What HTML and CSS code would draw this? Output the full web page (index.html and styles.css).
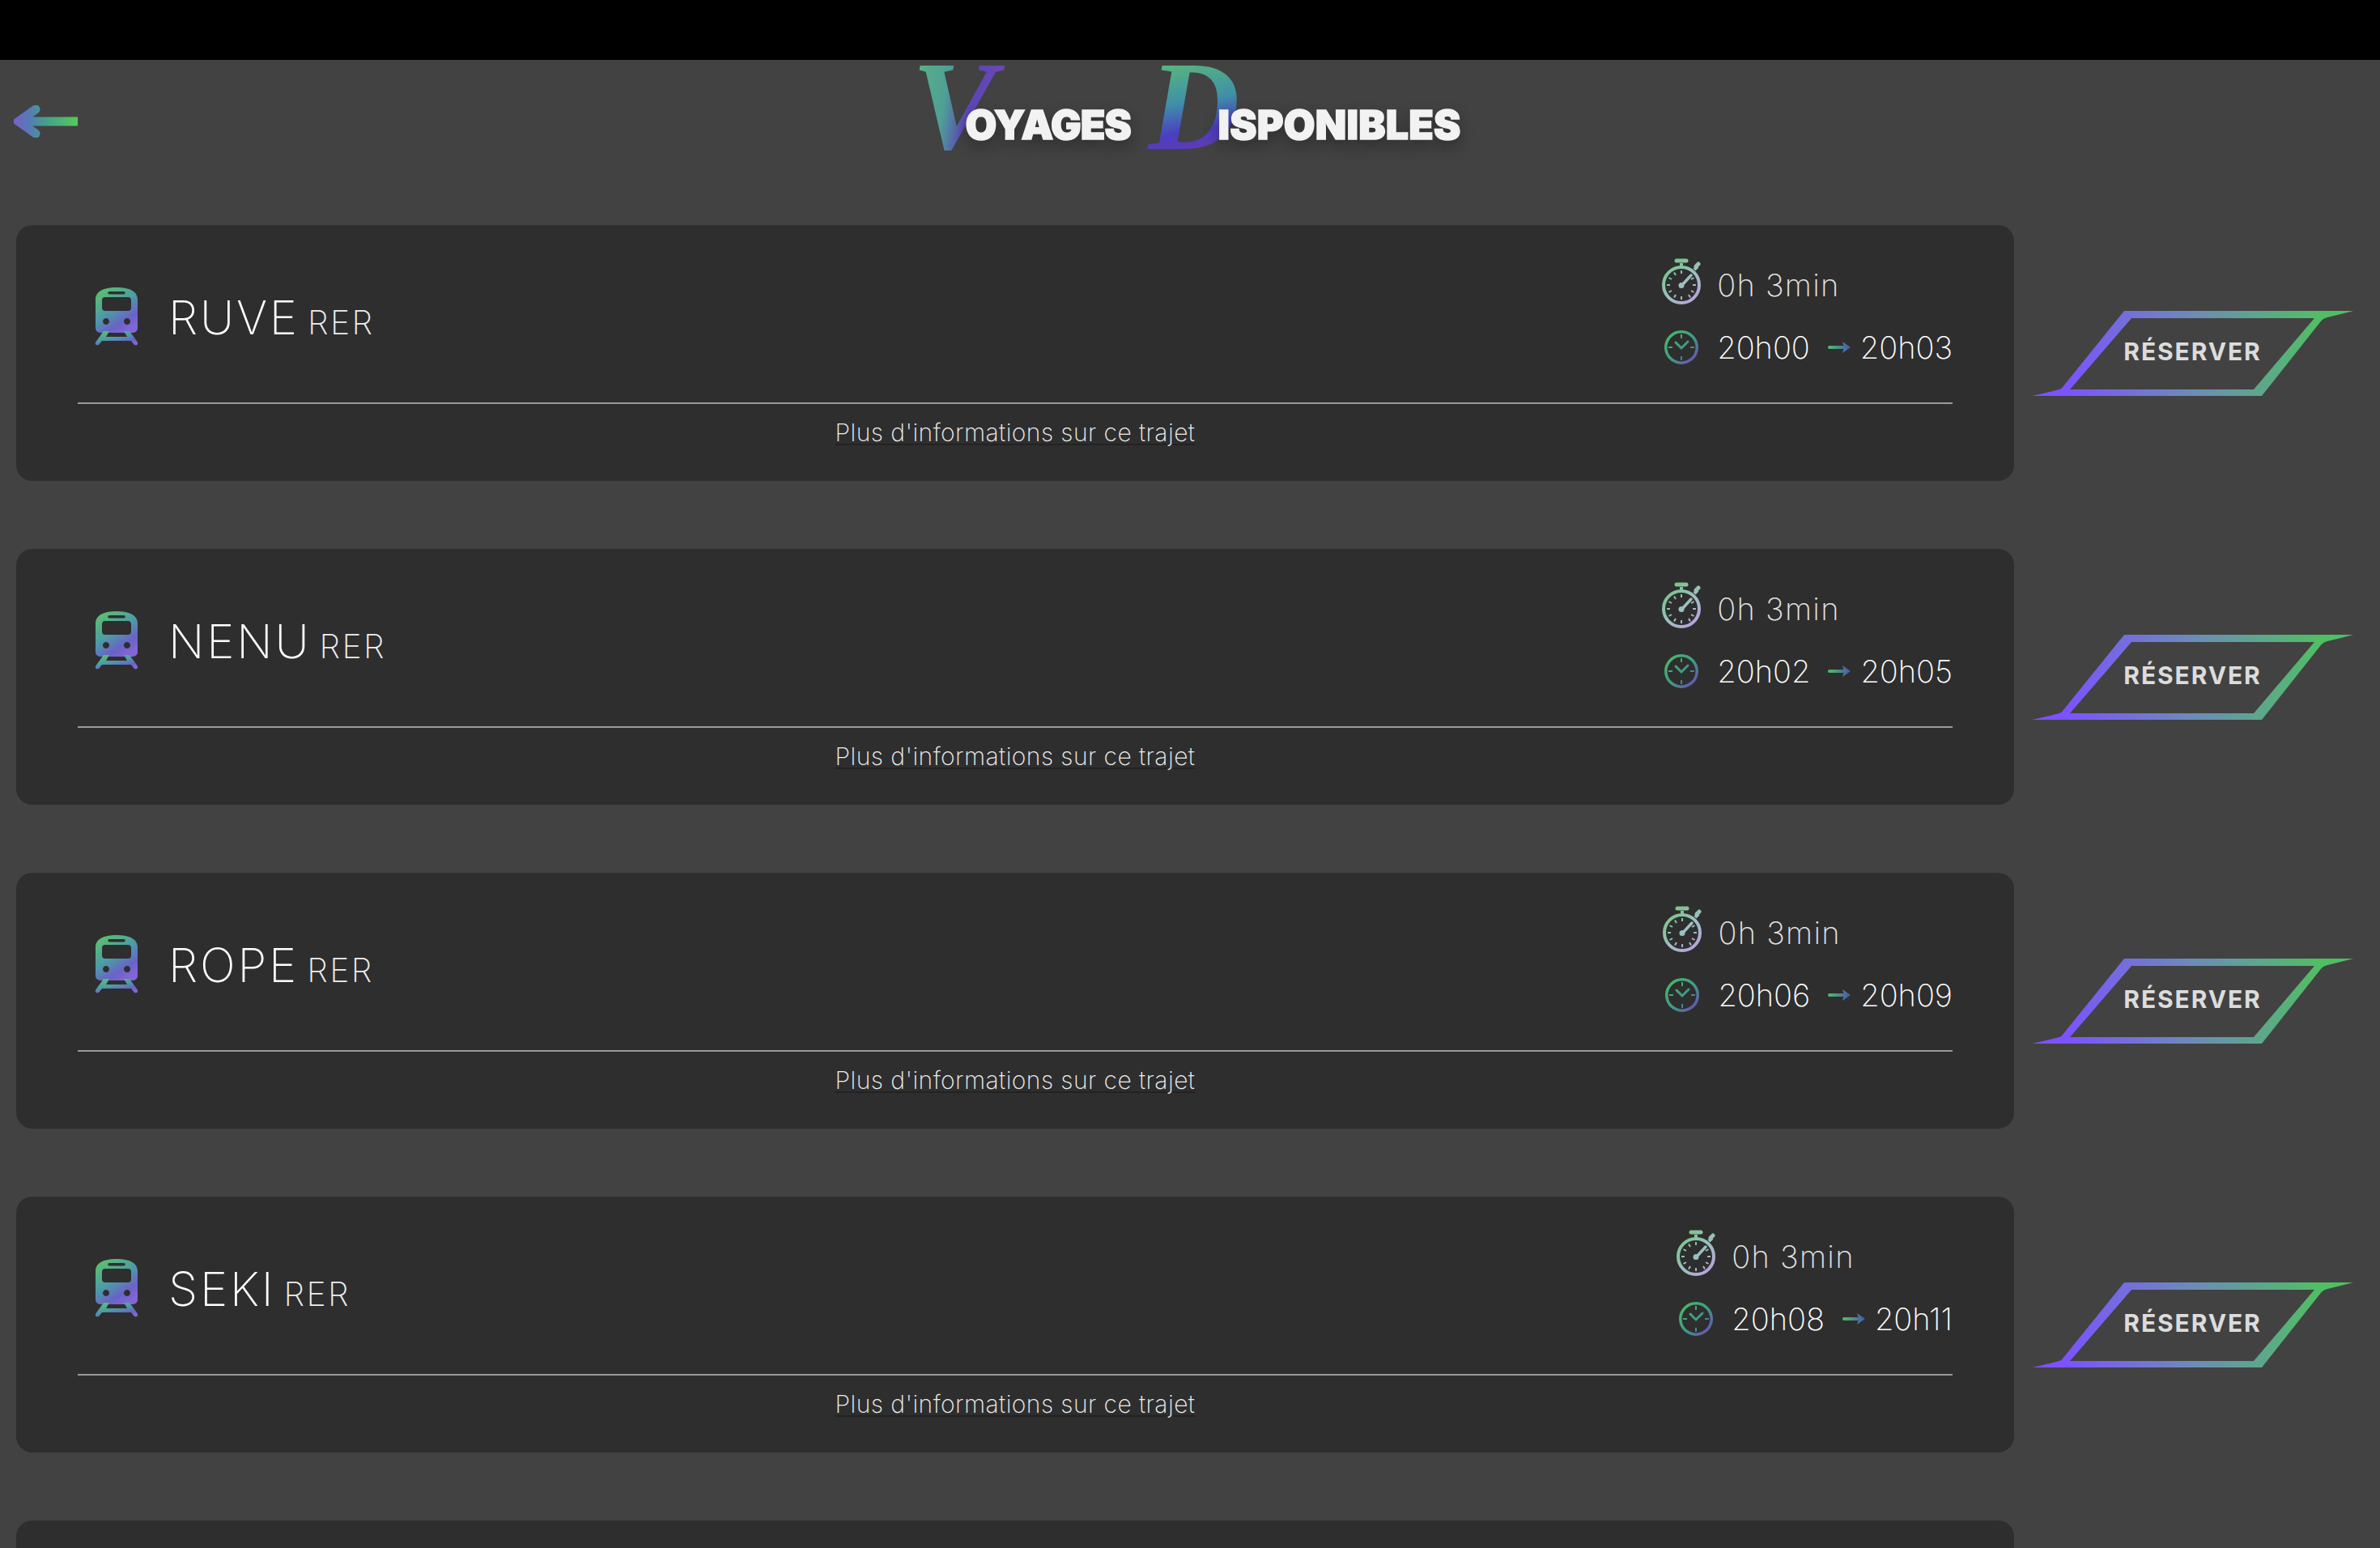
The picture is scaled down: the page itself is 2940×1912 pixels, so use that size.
FILE: index.html
```html
<!DOCTYPE html>
<html lang="fr">
<head>
<meta charset="utf-8">
<title>Voyages Disponibles</title>
<link rel="stylesheet" href="styles.css">
</head>
<body>
<svg class="defs" aria-hidden="true">
  <defs>
    <linearGradient id="gTrain" x1="0.1" y1="0" x2="0.7" y2="1">
      <stop offset="0" stop-color="#5cc46a"/><stop offset=".5" stop-color="#4d9aa8"/><stop offset=".8" stop-color="#6a62c8"/><stop offset="1" stop-color="#8266d8"/>
    </linearGradient>
    <linearGradient id="gWatch" gradientUnits="userSpaceOnUse" x1="4" y1="10" x2="46" y2="54">
      <stop offset="0" stop-color="#78c485"/><stop offset=".5" stop-color="#9cc0c0"/><stop offset="1" stop-color="#bb9fe0"/>
    </linearGradient>
    <linearGradient id="gClock" gradientUnits="userSpaceOnUse" x1="4" y1="4" x2="38" y2="38">
      <stop offset="0" stop-color="#48b86a"/><stop offset=".55" stop-color="#3f9a86"/><stop offset="1" stop-color="#6a4fb8"/>
    </linearGradient>
    <linearGradient id="gArrow" gradientUnits="userSpaceOnUse" x1="0" y1="0" x2="28" y2="0">
      <stop offset="0" stop-color="#4fc061"/><stop offset="1" stop-color="#4a55b0"/>
    </linearGradient>
    <linearGradient id="gBack" gradientUnits="userSpaceOnUse" x1="0" y1="0" x2="80" y2="0">
      <stop offset="0" stop-color="#7860c8"/><stop offset=".22" stop-color="#5878b8"/><stop offset=".5" stop-color="#44a08c"/><stop offset="1" stop-color="#55cc55"/>
    </linearGradient>
    <linearGradient id="gBtn" gradientUnits="userSpaceOnUse" x1="40" y1="0" x2="360" y2="0">
      <stop offset="0" stop-color="#7c52ff"/><stop offset=".5" stop-color="#6c8cb8"/><stop offset="1" stop-color="#4fc061"/>
    </linearGradient>
    <symbol id="train" viewBox="0 0 56 72">
      <path fill="url(#gTrain)" fill-rule="evenodd" d="M2 15C2 5 12 0 28 0S54 5 54 15V50C54 54 51 56 47 56H9C5 56 2 54 2 50ZM19 5a1.5 1.5 0 0 0 0 3.500H37a1.500 1.500 0 0 0 0-3.500ZM14 12a4 4 0 0 0-4 4v9a4 4 0 0 0 4 4H42a4 4 0 0 0 4-4V16a4 4 0 0 0-4-4ZM15 38a4 4 0 1 0 0.010 0ZM41 38a4 4 0 1 0 0.010 0Z"/>
      <path fill="url(#gTrain)" d="M12 54H19L15 61H41L37 54H44L52 65C56 70 54 72 50 71L46 66H10L6 71C2 72 0 70 4 65Z"/>
    </symbol>
    <symbol id="watch" viewBox="0 0 48 57">
      <g fill="none" stroke="url(#gWatch)">
        <circle cx="24" cy="33" r="22" stroke-width="4"/>
        <path stroke-width="2" d="M24 15v4M24 47v4M6 33h4M38 33h4M15 17.500l2 3.500M33 45l2 3.500M8.500 24l3.500 2M36 40l3.500 2M8.500 42l3.500-2M36 26l3.500-2M15 48.500l2-3.500"/>
        <path stroke-width="3.500" stroke-linecap="round" d="M24 34L36 21"/>
        <path stroke-width="4" d="M24 6v5M40 14l4-4"/>
        <path stroke-width="5" stroke-linecap="round" d="M18 3h12M42 10l3-3"/>
      </g>
      <circle cx="24" cy="33.500" r="3.500" fill="url(#gWatch)"/>
    </symbol>
    <symbol id="clock" viewBox="0 0 42 42">
      <g fill="none" stroke="url(#gClock)">
        <circle cx="21" cy="21" r="19.250" stroke-width="3.500"/>
        <path stroke-width="2" d="M21 5v5M21 32v5M5 21h5M32 21h5"/>
        <path stroke-width="3" stroke-linecap="round" d="M14 15l7 7 8-8"/>
      </g>
    </symbol>
    <symbol id="arrow" viewBox="0 0 28 14">
      <path fill="none" stroke="url(#gArrow)" stroke-width="4" stroke-linecap="round" d="M2 7H24"/>
      <path fill="url(#gArrow)" d="M18 0L28 7L18 14L20 7Z"/>
    </symbol>
    <symbol id="btn" viewBox="0 0 397 105">
      <path fill="url(#gBtn)" fill-rule="evenodd" d="M0 105C10 103 22 100 30 98C34 97 37 96 38 94L114 0H397C387 3 376 5 365 8C361 9 358 11 356 14L284 105ZM123 9L47 97H274L349 9Z"/>
    </symbol>
  </defs>
</svg>

<div class="topbar"></div>

<header class="header">
  <a class="back" href="#" aria-label="Retour">
    <svg class="back-icon" viewBox="0 0 80 40">
      <path fill="none" stroke="url(#gBack)" stroke-width="11" stroke-linecap="round" stroke-linejoin="miter" d="M27 5L6 20L27 35"/>
      <path fill="none" stroke="url(#gBack)" stroke-width="11" stroke-linecap="butt" d="M8 20H79"/>
    </svg>
  </a>
  <h1 class="title">
    <span class="cap cap-v">V</span><span class="word word-1">OYAGES</span><span class="cap cap-d">D</span><span class="word word-2">ISPONIBLES</span>
  </h1>
  <span class="header-end"></span>
</header>

<main class="list">
  <section class="row">
    <article class="card">
      <div class="card-top">
        <div class="line-name">
          <svg class="train"><use href="#train"/></svg>
          <p class="name">RUVE <span class="kind">RER</span></p>
        </div>
        <div class="times">
          <div class="time-row"><svg class="watch"><use href="#watch"/></svg><span class="duration">0h 3min</span></div>
          <div class="time-row"><svg class="clock"><use href="#clock"/></svg><span class="hour">20h00</span><svg class="mini"><use href="#arrow"/></svg><span class="hour">20h03</span></div>
        </div>
      </div>
      <div class="card-foot"><a class="more" href="#">Plus d'informations sur ce trajet</a></div>
    </article>
    <a class="book" href="#"><svg class="book-shape"><use href="#btn"/></svg><span class="book-label">RÉSERVER</span></a>
  </section>

  <section class="row">
    <article class="card">
      <div class="card-top">
        <div class="line-name">
          <svg class="train"><use href="#train"/></svg>
          <p class="name">NENU <span class="kind">RER</span></p>
        </div>
        <div class="times">
          <div class="time-row"><svg class="watch"><use href="#watch"/></svg><span class="duration">0h 3min</span></div>
          <div class="time-row"><svg class="clock"><use href="#clock"/></svg><span class="hour">20h02</span><svg class="mini"><use href="#arrow"/></svg><span class="hour">20h05</span></div>
        </div>
      </div>
      <div class="card-foot"><a class="more" href="#">Plus d'informations sur ce trajet</a></div>
    </article>
    <a class="book" href="#"><svg class="book-shape"><use href="#btn"/></svg><span class="book-label">RÉSERVER</span></a>
  </section>

  <section class="row">
    <article class="card">
      <div class="card-top">
        <div class="line-name">
          <svg class="train"><use href="#train"/></svg>
          <p class="name">ROPE <span class="kind">RER</span></p>
        </div>
        <div class="times">
          <div class="time-row"><svg class="watch"><use href="#watch"/></svg><span class="duration">0h 3min</span></div>
          <div class="time-row"><svg class="clock"><use href="#clock"/></svg><span class="hour">20h06</span><svg class="mini"><use href="#arrow"/></svg><span class="hour">20h09</span></div>
        </div>
      </div>
      <div class="card-foot"><a class="more" href="#">Plus d'informations sur ce trajet</a></div>
    </article>
    <a class="book" href="#"><svg class="book-shape"><use href="#btn"/></svg><span class="book-label">RÉSERVER</span></a>
  </section>

  <section class="row">
    <article class="card">
      <div class="card-top">
        <div class="line-name">
          <svg class="train"><use href="#train"/></svg>
          <p class="name">SEKI <span class="kind">RER</span></p>
        </div>
        <div class="times">
          <div class="time-row"><svg class="watch"><use href="#watch"/></svg><span class="duration">0h 3min</span></div>
          <div class="time-row"><svg class="clock"><use href="#clock"/></svg><span class="hour">20h08</span><svg class="mini"><use href="#arrow"/></svg><span class="hour">20h11</span></div>
        </div>
      </div>
      <div class="card-foot"><a class="more" href="#">Plus d'informations sur ce trajet</a></div>
    </article>
    <a class="book" href="#"><svg class="book-shape"><use href="#btn"/></svg><span class="book-label">RÉSERVER</span></a>
  </section>

  <section class="row">
    <article class="card"></article>
  </section>
</main>
</body>
</html>
```

FILE: styles.css
```css
* { box-sizing: border-box; }

html, body {
  margin: 0;
  height: 1912px;
  overflow: hidden;
}

body {
  background: #424242;
  color: #fff;
  font-family: Inter, "Liberation Sans", sans-serif;
}

.defs { display: block; width: 0; height: 0; }

.topbar { height: 74px; background: #000; }

.header {
  height: 152px;
  margin-bottom: 52px;
  display: grid;
  grid-template-columns: 1fr auto 1fr;
  align-items: center;
}

.back { display: block; padding-left: 17px; line-height: 0; }
.back-icon { width: 80px; height: 40px; }

.title {
  margin: -36px 0 0;
  padding-right: 9px;
  display: flex;
  align-items: flex-end;
  height: 120px;
  font-weight: 900;
}

.cap {
  font-family: "Liberation Serif", serif;
  font-style: italic;
  font-weight: 700;
  font-size: 156px;
  line-height: 120px;
  color: transparent;
  -webkit-background-clip: text;
  background-clip: text;
  padding: 0 14px;
}

.cap-v {
  background-image: linear-gradient(100deg, #5dbb7a 0%, #4f9f96 42%, #5a46b8 62%, #7a48b0 100%);
  margin-left: -14px;
  margin-right: -52px;
}

.cap-d {
  background-image: linear-gradient(170deg, #60c070 0%, #3f8fa8 45%, #4a3fc0 70%, #7038a8 100%);
  margin-left: 8px;
  margin-right: -41px;
}

.word {
  font-size: 50px;
  line-height: 50px;
  color: #f2f2f2;
  -webkit-text-stroke: 1.5px #f2f2f2;
  text-shadow: 0 8px 18px rgba(0, 0, 0, .35);
  padding-bottom: 13px;
}

.word-1 { letter-spacing: -0.9px; }
.word-2 { letter-spacing: 0.2px; }

.list {
  display: flex;
  flex-direction: column;
  gap: 84px;
}

.row {
  display: flex;
  align-items: center;
  gap: 22px;
  padding-left: 20px;
}

.card {
  flex: 0 0 2468px;
  height: 316px;
  padding: 0 76px;
  background: #2e2e2e;
  border-radius: 20px;
}

.card-top {
  height: 221px;
  display: flex;
  align-items: center;
  justify-content: space-between;
  border-bottom: 2px solid #9a9a9a;
}

.line-name {
  display: flex;
  align-items: center;
  gap: 36px;
  padding-left: 20px;
  padding-top: 6px;
}

.train { width: 56px; height: 72px; }

.name {
  margin: 0;
  padding-top: 2px;
  font-size: 58px;
  line-height: 1;
  font-weight: 200;
  color: #fff;
  letter-spacing: 2.8px;
  word-spacing: -9px;
}

.kind { font-size: 41px; color: #eee; letter-spacing: 2.4px; }

.times {
  display: flex;
  flex-direction: column;
  gap: 31px;
  padding-top: 3px;
}

.time-row {
  display: flex;
  align-items: center;
  gap: 20px;
}

.watch { width: 48px; height: 57px; margin-top: -8px; }
.clock { width: 42px; height: 42px; margin: 0 3px; }

.duration {
  font-size: 38px;
  line-height: 44px;
  font-weight: 200;
  color: #e4e4e4;
  letter-spacing: 1.3px;
}

.hour {
  font-size: 38px;
  line-height: 44px;
  font-weight: 200;
  color: #fff;
}

.mini { width: 28px; height: 14px; margin: 0 -8px 0 2px; }

.card-foot {
  height: 93px;
  padding-top: 17px;
  text-align: center;
}

.more {
  font-size: 30px;
  line-height: 36px;
  font-weight: 200;
  color: #eee;
  letter-spacing: 0.45px;
  text-decoration: underline;
  text-decoration-color: #222;
  text-decoration-thickness: 2px;
  text-underline-offset: 3px;
}

.book {
  width: 397px;
  height: 105px;
  display: grid;
  place-items: center;
  text-decoration: none;
}

.book-shape { grid-area: 1 / 1; width: 397px; height: 105px; }

.book-label {
  grid-area: 1 / 1;
  padding-bottom: 4px;
  font-size: 30px;
  font-weight: 700;
  color: #dcdcdc;
  letter-spacing: 1.9px;
}
```
